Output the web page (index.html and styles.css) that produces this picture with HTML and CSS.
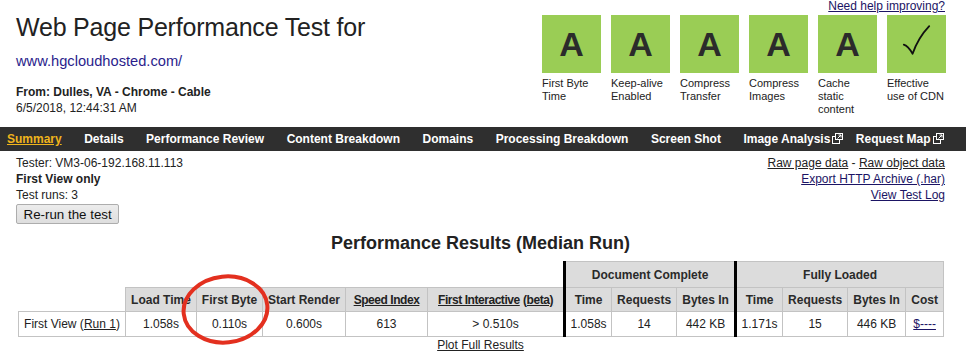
FILE: index.html
```html
<!DOCTYPE html>
<html>
<head>
<meta charset="utf-8">
<title>Web Page Performance Test</title>
<link rel="stylesheet" href="styles.css">
</head>
<body>
<header class="top">
  <div class="intro">
    <h1 class="title">Web Page Performance Test for</h1>
    <a class="url" href="#">www.hgcloudhosted.com/</a>
    <div class="from">From: Dulles, VA - Chrome - Cable</div>
    <div class="date">6/5/2018, 12:44:31 AM</div>
  </div>
  <div class="grades">
    <a class="help" href="#">Need help improving?</a>
    <ul class="grade-list">
      <li class="grade"><span class="box">A</span><span class="label">First Byte Time</span></li>
      <li class="grade"><span class="box">A</span><span class="label">Keep-alive Enabled</span></li>
      <li class="grade"><span class="box">A</span><span class="label">Compress Transfer</span></li>
      <li class="grade"><span class="box">A</span><span class="label">Compress Images</span></li>
      <li class="grade"><span class="box">A</span><span class="label">Cache static content</span></li>
      <li class="grade"><span class="box"><svg class="check" viewBox="0 0 59 58" width="59" height="58"><path d="M16.8 29.6 Q21 30.6 25.6 38.8 Q31 23 42.2 11.2" /></svg></span><span class="label">Effective use of CDN</span></li>
    </ul>
  </div>
</header>

<nav class="tabs">
  <a class="tab active" href="#">Summary</a>
  <a class="tab" href="#">Details</a>
  <a class="tab" href="#">Performance Review</a>
  <a class="tab" href="#">Content Breakdown</a>
  <a class="tab" href="#">Domains</a>
  <a class="tab" href="#">Processing Breakdown</a>
  <a class="tab" href="#">Screen Shot</a>
  <a class="tab" href="#">Image Analysis<svg class="ext" viewBox="0 0 11 11" width="11" height="11"><rect x="0.5" y="3.5" width="7" height="7"/><rect class="ext-front" x="3.5" y="0.5" width="7" height="6"/><path d="M5.5 5.5 L9 2 M6.5 2 H9 V4.5"/></svg></a>
  <a class="tab" href="#">Request Map<svg class="ext" viewBox="0 0 11 11" width="11" height="11"><rect x="0.5" y="3.5" width="7" height="7"/><rect class="ext-front" x="3.5" y="0.5" width="7" height="6"/><path d="M5.5 5.5 L9 2 M6.5 2 H9 V4.5"/></svg></a>
</nav>

<main>
  <section class="meta">
    <div class="info">
      <div>Tester: VM3-06-192.168.11.113</div>
      <div class="strong">First View only</div>
      <div>Test runs: 3</div>
      <button class="rerun" type="button">Re-run the test</button>
    </div>
    <div class="links">
      <div><a href="#">Raw page data</a> - <a href="#">Raw object data</a></div>
      <div><a class="visited" href="#">Export HTTP Archive (.har)</a></div>
      <div><a class="visited" href="#">View Test Log</a></div>
    </div>
  </section>

  <section class="results">
    <h2 class="results-title">Performance Results (Median Run)</h2>
    <table class="perf">
      <colgroup>
        <col class="w107"><col class="w71"><col class="w66"><col class="w83"><col class="w82"><col class="w137">
        <col class="w47"><col class="w65"><col class="w59">
        <col class="w47"><col class="w65"><col class="w58"><col class="w38">
      </colgroup>
      <tr class="r1">
        <td class="blank" colspan="6"></td>
        <th class="sep" colspan="3">Document Complete</th>
        <th class="sep" colspan="4">Fully Loaded</th>
      </tr>
      <tr class="r2">
        <td class="blank"></td>
        <th>Load Time</th>
        <th>First Byte</th>
        <th>Start Render</th>
        <th><a href="#">Speed Index</a></th>
        <th><a href="#">First Interactive</a> <a href="#">(beta)</a></th>
        <th class="sep">Time</th>
        <th>Requests</th>
        <th>Bytes In</th>
        <th class="sep">Time</th>
        <th>Requests</th>
        <th>Bytes In</th>
        <th>Cost</th>
      </tr>
      <tr class="r3">
        <td>First View (<a href="#">Run 1</a>)</td>
        <td>1.058s</td>
        <td>0.110s</td>
        <td>0.600s</td>
        <td>613</td>
        <td>&gt; 0.510s</td>
        <td class="sep">1.058s</td>
        <td>14</td>
        <td>442 KB</td>
        <td class="sep">1.171s</td>
        <td>15</td>
        <td>446 KB</td>
        <td><a class="visited" href="#">$----</a></td>
      </tr>
    </table>
    <a class="plot" href="#">Plot Full Results</a>
    <svg class="circle" viewBox="0 0 92 73" width="92" height="73"><ellipse cx="45.5" cy="36.5" rx="42" ry="33" transform="rotate(-6 45.5 36.5)"/></svg>
  </section>
</main>
</body>
</html>
```

FILE: styles.css
```css
* { box-sizing: border-box; }

body {
  margin: 0;
  font-family: "Liberation Sans", Arial, sans-serif;
  font-size: 12px;
  color: #222;
  background: #fff;
}

a { color: #222; }
a.visited { color: #1b1464; }

/* header */
.top {
  display: flex;
  justify-content: space-between;
  height: 116px;
  padding: 0 20px 0 16px;
}

.title {
  margin: 12px 0 0;
  font-size: 25px;
  line-height: 30px;
  font-weight: normal;
  letter-spacing: -0.2px;
  color: #222;
}

.url {
  display: block;
  margin-top: 10px;
  font-size: 14.67px;
  line-height: 18px;
  color: #2a1d8c;
  text-decoration: none;
}

.from {
  margin-top: 14px;
  line-height: 16px;
  font-weight: bold;
}

.date { line-height: 16px; }

.grades {
  display: flex;
  flex-direction: column;
  align-items: flex-end;
}

.help {
  display: block;
  height: 12px;
  margin-right: 1px;
  font-size: 12px;
  line-height: 13px;
  color: #1b1464;
}

.grade-list {
  display: flex;
  gap: 10px;
  margin: 3px 0 0;
  padding: 0;
  list-style: none;
}

.grade { width: 59px; }

.box {
  display: flex;
  align-items: center;
  justify-content: center;
  height: 58px;
  background: #9acd55;
  font-size: 34px;
  font-weight: bold;
  color: #2b2b2b;
}

.check { display: block; }
.check path {
  fill: none;
  stroke: #111;
  stroke-width: 1.8;
  stroke-linecap: round;
  stroke-linejoin: round;
}

.label {
  display: block;
  margin-top: 4px;
  font-size: 11px;
  line-height: 13px;
  color: #222;
}

/* navigation */
.tabs {
  display: flex;
  gap: 22.5px;
  height: 24px;
  margin-top: 11px;
  padding-left: 7px;
  background: #2f2f2f;
}

.tab {
  color: #fff;
  font-weight: bold;
  line-height: 24px;
  text-decoration: none;
  white-space: nowrap;
}

.tab.active {
  color: #f0b41c;
  text-decoration: underline;
}

.ext {
  margin-left: 2px;
  margin-right: -10px;
  vertical-align: -1px;
}
.ext rect, .ext path {
  fill: none;
  stroke: #fff;
  stroke-width: 1;
}
.ext rect.ext-front { fill: #2f2f2f; }

/* meta */
.meta {
  display: flex;
  justify-content: space-between;
  padding: 4px 21px 0 16px;
  line-height: 16px;
}

.strong { font-weight: bold; }

.links { text-align: right; }

.rerun {
  display: block;
  height: 20px;
  margin-top: 1px;
  padding: 0 6.5px;
  font-family: "Liberation Sans", Arial, sans-serif;
  font-size: 13.33px;
  color: #111;
  background: linear-gradient(#ececec, #dedede);
  border: 1px solid #adadad;
  border-radius: 2px;
}

/* results */
.results {
  position: relative;
  width: 925px;
  margin: 8px 0 0 18px;
}

.results-title {
  margin: 0 0 7px;
  font-size: 18px;
  line-height: 22px;
  text-align: center;
}

.perf {
  width: 925px;
  border-collapse: collapse;
  table-layout: fixed;
}

.w107 { width: 107px; }
.w71 { width: 71px; }
.w66 { width: 66px; }
.w83 { width: 83px; }
.w82 { width: 82px; }
.w137 { width: 137px; }
.w47 { width: 47px; }
.w65 { width: 65px; }
.w59 { width: 59px; }
.w58 { width: 58px; }
.w38 { width: 38px; }

.perf th, .perf td {
  padding: 0 2px;
  border: 1px solid #c3c3c3;
  font-size: 12px;
  text-align: center;
  white-space: nowrap;
  overflow: hidden;
}

.perf th {
  background: #dcdcdc;
  font-weight: bold;
  color: #2a2a2a;
}

.perf th a { letter-spacing: -0.45px; }

.perf td.blank {
  border: none;
  background: none;
}

.perf .sep { border-left: 3px solid #000; }

.r1 { height: 26px; }
.r2 { height: 24px; }
.r3 { height: 25px; }

.plot {
  display: block;
  width: max-content;
  margin: 0 auto;
  line-height: 14px;
  margin-top: 1px;
}

.circle {
  position: absolute;
  left: 162px;
  top: 41px;
}
.circle ellipse {
  fill: none;
  stroke: #e3301f;
  stroke-width: 4;
}
```
